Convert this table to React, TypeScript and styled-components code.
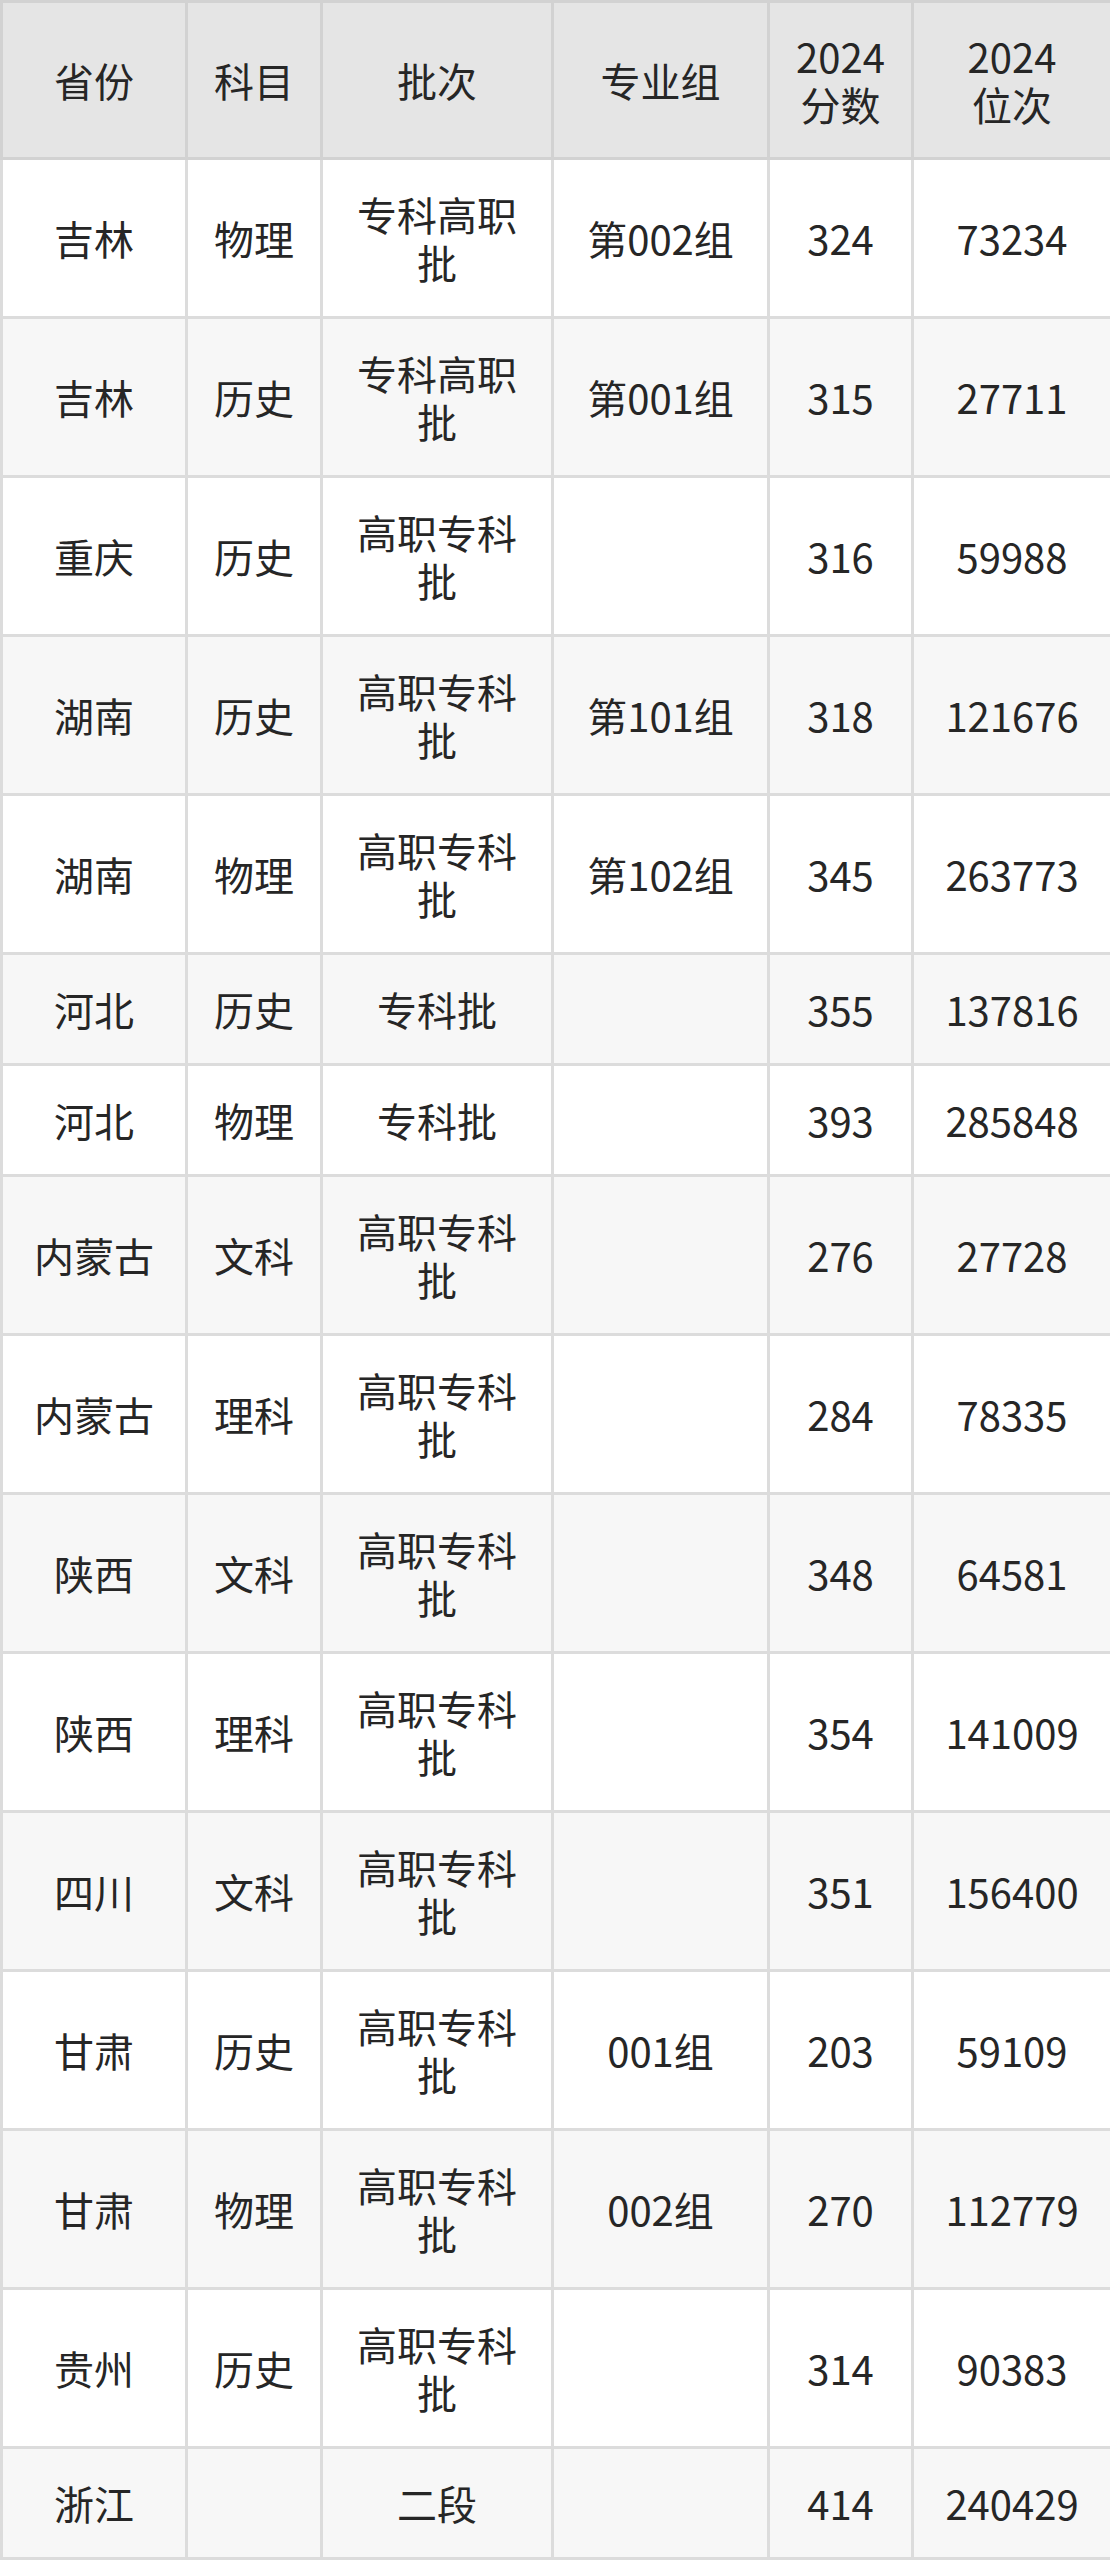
import React from "react";
import styled, { createGlobalStyle } from "styled-components";

const Global = createGlobalStyle`
  html, body { margin: 0; padding: 0; background: #ffffff; }
  body { font-family: "Noto Sans CJK SC", "Noto Sans", sans-serif; }
`;

const Table = styled.table`
  width: 1110px;
  border-collapse: collapse;
  table-layout: fixed;
  font-family: "Noto Sans CJK SC", "Noto Sans", sans-serif;
  font-size: 40px;
  line-height: 48px;
  color: #262626;
`;

const HeadCell = styled.th`
  background: #e5e5e5;
  border: 3px solid #d2d2d2;
  padding: 29px 16px;
  font-weight: 400;
  text-align: center;
  vertical-align: middle;
`;

const Row = styled.tr<{ $alt: boolean }>`
  background: ${(p) => (p.$alt ? "#f7f7f7" : "#ffffff")};
`;

const Cell = styled.td`
  border: 3px solid #dcdcdc;
  padding: 30px 16px;
  text-align: center;
  vertical-align: middle;
  word-break: break-all;
`;

type R = [string, string, string[], string, string, string];

const rows: R[] = [
  ["吉林", "物理", ["专科高职", "批"], "第002组", "324", "73234"],
  ["吉林", "历史", ["专科高职", "批"], "第001组", "315", "27711"],
  ["重庆", "历史", ["高职专科", "批"], "", "316", "59988"],
  ["湖南", "历史", ["高职专科", "批"], "第101组", "318", "121676"],
  ["湖南", "物理", ["高职专科", "批"], "第102组", "345", "263773"],
  ["河北", "历史", ["专科批"], "", "355", "137816"],
  ["河北", "物理", ["专科批"], "", "393", "285848"],
  ["内蒙古", "文科", ["高职专科", "批"], "", "276", "27728"],
  ["内蒙古", "理科", ["高职专科", "批"], "", "284", "78335"],
  ["陕西", "文科", ["高职专科", "批"], "", "348", "64581"],
  ["陕西", "理科", ["高职专科", "批"], "", "354", "141009"],
  ["四川", "文科", ["高职专科", "批"], "", "351", "156400"],
  ["甘肃", "历史", ["高职专科", "批"], "001组", "203", "59109"],
  ["甘肃", "物理", ["高职专科", "批"], "002组", "270", "112779"],
  ["贵州", "历史", ["高职专科", "批"], "", "314", "90383"],
  ["浙江", "", ["二段"], "", "414", "240429"],
];

const widths = [185, 135, 231, 216, 144, 199];

const Lines: React.FC<{ lines: string[] }> = ({ lines }) => (
  <>
    {lines.map((l, i) => (
      <React.Fragment key={i}>
        {i > 0 && <br />}
        {l}
      </React.Fragment>
    ))}
  </>
);

export default function App() {
  return (
    <>
      <Global />
      <Table>
        <colgroup>
          {widths.map((w, i) => (
            <col key={i} style={{ width: w }} />
          ))}
        </colgroup>
        <thead>
          <tr>
            <HeadCell>省份</HeadCell>
            <HeadCell>科目</HeadCell>
            <HeadCell>批次</HeadCell>
            <HeadCell>专业组</HeadCell>
            <HeadCell>
              <Lines lines={["2024", "分数"]} />
            </HeadCell>
            <HeadCell>
              <Lines lines={["2024", "位次"]} />
            </HeadCell>
          </tr>
        </thead>
        <tbody>
          {rows.map((r, i) => (
            <Row key={i} $alt={i % 2 === 1}>
              <Cell>{r[0]}</Cell>
              <Cell>{r[1]}</Cell>
              <Cell>
                <Lines lines={r[2]} />
              </Cell>
              <Cell>{r[3]}</Cell>
              <Cell>{r[4]}</Cell>
              <Cell>{r[5]}</Cell>
            </Row>
          ))}
        </tbody>
      </Table>
    </>
  );
}
